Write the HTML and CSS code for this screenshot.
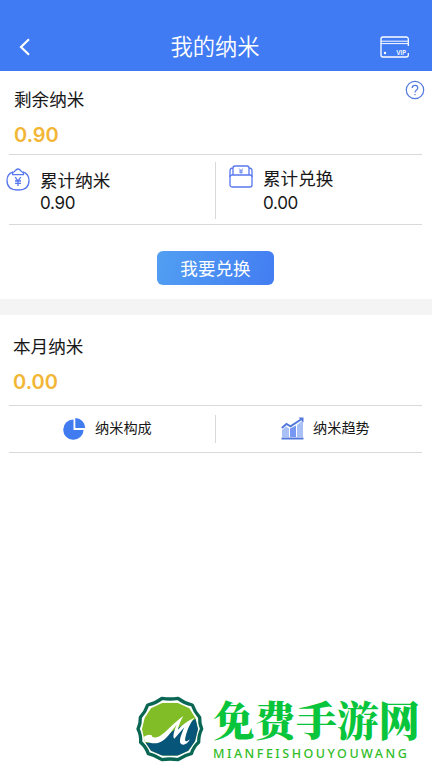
FILE: index.html
```html
<!DOCTYPE html>
<html lang="zh-CN">
<head>
<meta charset="utf-8">
<meta name="viewport" content="width=device-width, initial-scale=1">
<title>我的纳米</title>
<link rel="stylesheet" href="styles.css">
</head>
<body>
<header class="topbar">
  <svg class="back" width="12" height="18" viewBox="0 0 12 18"><path d="M10 1.300 2 9l8 7.700"/></svg>
  <h1>我的纳米</h1>
  <svg class="vip" width="30" height="22" viewBox="0 0 30 22">
    <path d="M28.300 10V3a2 2 0 0 0-2-2H3a2 2 0 0 0-2 2v16a2 2 0 0 0 2 2h23.300a2 2 0 0 0 2-2v-2"/>
    <path class="thin" d="M1 5.200h27.300M1 7.600h27.300"/>
    <circle cx="5" cy="17" r="1.200"/>
    <text x="16.200" y="19">VIP</text>
  </svg>
</header>
<main>
  <section class="balance">
    <div class="summary">
      <h2>剩余纳米</h2>
      <p class="amount">0.90</p>
      <svg class="help" width="20" height="20" viewBox="0 0 20 20"><circle cx="10" cy="10" r="8.700"/><path d="M7.200 8.100C7.200 6.300 8.300 5.400 10 5.400s2.800 1 2.800 2.500c0 2-2.800 2.200-2.800 4.600M10 14v1.300"/></svg>
    </div>
    <div class="totals">
      <div class="total earned">
        <svg width="24" height="24" viewBox="0 0 24 24"><path d="M7.200 3.800C3.400 5 1 8.400 1 12.400 1 18.700 5.300 22 12 22s11-3.300 11-9.600c0-4-2.400-7.400-6.200-8.600"/><path d="M6.600 6.700V5.200c0-.8.5-1.200 1.500-1.400C9 3.600 9.600 1 12 1s3 2.600 3.900 2.800c1 .2 1.500.6 1.500 1.400v1.500z"/><path d="m9.200 9.200 2.800 4 2.800-4M12 13v5M9 13h6M9 15.400h6"/></svg>
        <div><h3>累计纳米</h3><p>0.90</p></div>
      </div>
      <div class="total redeemed">
        <svg width="24" height="24" viewBox="0 0 24 24"><rect x="1" y="10" width="22" height="12" rx="2"/><path d="M1 12V6c0-2 1-3 3-3m19 9V6c0-2-1-3-3-3M4 10V3.200C4 1.800 4.700 1 6 1h12c1.300 0 2 .8 2 2.200V10"/><path class="yen" d="m10.200 3.500 1.800 2.300 1.800-2.300M12 6v2.800M10.200 5.800h3.600M10.200 7.300h3.600"/></svg>
        <div><h3>累计兑换</h3><p>0.00</p></div>
      </div>
    </div>
    <button class="redeem" type="button">我要兑换</button>
  </section>
  <section class="month">
    <h2>本月纳米</h2>
    <p class="amount">0.00</p>
    <nav class="links">
      <a><svg width="23" height="22" viewBox="0 0 23 22"><path class="pie" d="M10.500 1.400A10.200 10.200 0 1 0 20.600 12H10.500z"/><path class="pie" d="M12.300.1V10h9.900A10 10 0 0 0 12.300.1z"/></svg><span>纳米构成</span></a>
      <a><svg width="23" height="23" viewBox="0 0 23 23"><path class="pale" d="M1 13l4-3.500 3 1.800V20H1zM16 8l6-5v17h-6z"/><path class="mid" d="M9 11.500l6-3V20H9z"/><path class="base" d="M.5 20.500h22v2H.5z"/><path class="trend" d="M.8 11 5.500 7l4 2.300L20 2.500"/><path class="base" d="M17.500.5h5v5z"/></svg><span>纳米趋势</span></a>
    </nav>
  </section>
</main>
<footer class="brand">
  <svg width="72" height="72" viewBox="0 0 216 216">
    <defs>
      <clipPath id="badge"><path d="M86 26H130L166 43 184 72 192 105 183 142 163 170 130 185H86L51 170 32 142 24 105 32 72 51 43z"/></clipPath>
    </defs>
    <path class="rim" d="M84 13Q108 17 132 13 150 27 175 33 182 54 197 70 196 88 203 105 194 122 194 145 179 158 172 179 150 184 132 197 108 193 84 197 65 184 43 179 36 158 20 145 21 122 12 105 20 88 19 70 34 54 41 33 66 27 84 13z"/>
    <g clip-path="url(#badge)">
      <path class="leaf" d="M15 15h186v186H15z"/>
      <path class="sea" d="M15 143C70 155 88 130 125 105L180 77 205 65V205H15z"/>
      <path class="wave" d="M28 130Q40 119 53 124 54 133 67 130C90 125 103 99 148 66 139 82 134 95 132 107 143 94 158 82 181 71 166 91 156 115 153 138 155 144 161 142 168 136 160 153 142 157 138 145 137 132 145 114 151 100L121 134C115 130 120 110 128 92 112 110 98 140 72 147 55 151 45 143 28 143z"/>
    </g>
  </svg>
  <div class="brand-name"><strong>免费手游网</strong><span>MIANFEISHOUYOUWANG</span></div>
</footer>
</body>
</html>
```

FILE: styles.css
```css
* { box-sizing: border-box; }
body {
  margin: 0;
  min-height: 768px;
  display: flex;
  flex-direction: column;
  background: #fff;
  color: #171717;
  font-family: "Liberation Sans", "Noto Sans CJK SC", sans-serif;
}
h1, h2, h3, p { margin: 0; font-weight: 400; }
svg { display: block; flex: none; fill: none; }
.topbar {
  height: 71px;
  padding: 22px 22px 0 19px;
  display: grid;
  grid-template-columns: 30px 1fr 30px;
  align-items: center;
  background: #407bf3;
  color: #fff;
}
.topbar h1 { font-size: 22.3px; line-height: 30px; text-align: center; font-weight: 350; padding: 0 0 3px 1px; font-family: "Noto Sans CJK SC", sans-serif; }
.back { stroke: #fff; stroke-width: 2.2; }
.vip { stroke: #fff; stroke-width: 1.3; }
.vip .thin { stroke-width: 1; }
.vip circle { fill: #fff; stroke: none; }
.vip text { fill: #fff; stroke: none; font: 600 6px Inter, sans-serif; }
h2 { font-size: 17.6px; line-height: 26px; font-family: Inter, "Noto Sans CJK SC", sans-serif; }
.amount { color: #f2b636; font: 600 20px/26px Inter, sans-serif; }
.balance { height: 228px; padding: 0 10px 0 9px; }
.summary { position: relative; height: 84px; padding: 16px 0 0 5px; border-bottom: 1px solid #d9d9d9; }
.summary .amount { margin-top: 9px; }
.help { position: absolute; right: -3px; top: 9px; stroke: #5279dc; stroke-width: 1.2; }
.totals { height: 70px; display: grid; grid-template-columns: 207px 1fr; border-bottom: 1px solid #d9d9d9; padding: 7px 0 5px; }
.total { display: flex; }
.earned { border-right: 1px solid #d9d9d9; margin-left: -3px; gap: 10px; }
.earned svg { margin-top: 6px; }
.redeemed { padding-left: 13px; gap: 10px; }
.redeemed svg { margin-top: 3px; }
.total svg { stroke: #5878ef; stroke-width: 1.3; }
.total svg .yen { stroke-width: .8; }
.total h3 { font: 400 17.6px/24px Inter, "Noto Sans CJK SC", sans-serif; padding-top: 7px; }
.redeemed h3 { padding-top: 5px; }
.total p { font: 400 17px/20px Inter, sans-serif; letter-spacing: -.3px; }
.redeemed p { margin-top: 2px; }
.redeem {
  display: block;
  width: 117px;
  height: 34px;
  margin: 26px 0 0 148px;
  padding: 0;
  border: 0;
  border-radius: 6px;
  background: linear-gradient(105deg, #519ff2, #437df2);
  color: #fff;
  font: 400 17.6px/34px "Noto Sans CJK SC", sans-serif;
}
.month { border-top: 16px solid #f4f4f4; padding: 19px 10px 0 9px; }
.month h2 { padding-left: 4px; }
.month .amount { margin-top: 9px; padding-left: 4px; }
.links { height: 48px; margin-top: 10px; padding: 9px 0; display: grid; grid-template-columns: 207px 1fr; border: solid #d9d9d9; border-width: 1px 0; }
.links a { display: flex; align-items: center; font: 400 14.2px/24px Inter, "Noto Sans CJK SC", sans-serif; gap: 9px; padding-left: 54px; }
.links a + a { padding-left: 65px; }
.links a:first-child { border-right: 1px solid #d9d9d9; }
.links svg { margin-top: -1px; }
.links span { margin-top: -2px; }
.pie { fill: #407bf0; }
.pale { fill: #a9c0f7; }
.mid { fill: #7698f2; }
.base { fill: #5278dd; }
.trend { stroke: #5278dd; stroke-width: 2; }
.brand { margin-top: auto; height: 74px; padding-left: 134px; display: flex; gap: 7px; }
.rim { fill: #fff; stroke: #086653; stroke-width: 10; stroke-linejoin: round; }
.leaf { fill: #80bd27; }
.sea { fill: #075579; }
.wave { fill: #fff; }
.brand-name { color: #08c53b; white-space: nowrap; }
.brand-name strong { display: block; height: 51px; font: 900 41.4px/49px "Noto Serif CJK SC", "Noto Sans CJK SC", serif; }
.brand-name span { display: block; font: 500 12.5px/18px "Noto Sans", sans-serif; letter-spacing: 2.5px; color: #31bd28; }
```
